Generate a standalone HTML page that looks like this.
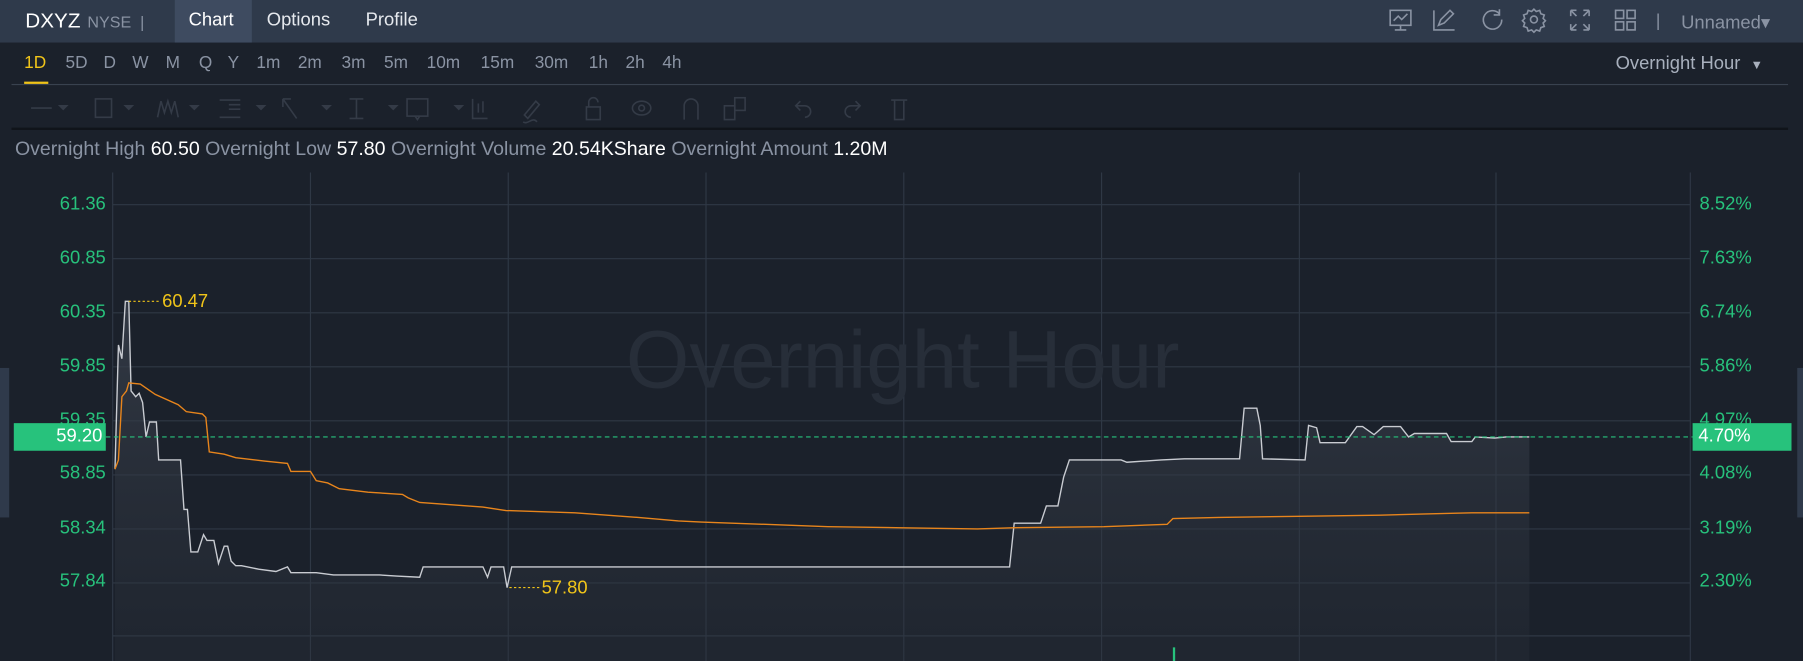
<!DOCTYPE html>
<html><head><meta charset="utf-8"><style>
html,body{margin:0;padding:0;background:#1b212b;overflow:hidden;width:1803px;height:661px}
#r{position:absolute;left:0;top:0;width:1568px;height:575px;transform:scale(1.14987);transform-origin:0 0;font-family:"Liberation Sans",sans-serif;background:#1b212b;overflow:hidden}
.a{position:absolute;white-space:nowrap}
#top{position:absolute;left:0;top:0;width:1568px;height:37px;background:#2f3a4b}
.tf{position:absolute;top:46px;font-size:15px;color:#8a93a3}
.yl{position:absolute;font-size:16px;color:#27c27c;text-align:right;width:80px;left:12px}
.yr{position:absolute;font-size:16px;color:#27c27c;left:1478px}
</style></head><body><div id="r">
<div id="top"></div>
<div class="a" style="left:152px;top:0;width:67px;height:37px;background:#3e4b60"></div>
<div class="a" style="left:22px;top:8px;font-size:18px;color:#fff">DXYZ</div>
<div class="a" style="left:76px;top:11px;font-size:14px;color:#8a93a3">NYSE &nbsp;|</div>
<div class="a" style="left:164px;top:9px;font-size:16px;color:#fff">Chart</div>
<div class="a" style="left:232px;top:9px;font-size:16px;color:#e6e9ee">Options</div>
<div class="a" style="left:318px;top:9px;font-size:16px;color:#e6e9ee">Profile</div>
<svg class="a" style="left:1200px;top:5px" width="230" height="28" fill="none" stroke="#8a93a3" stroke-width="1.4">
<rect x="9" y="4" width="18" height="13"/><path d="M12 13l4-4 3 3 5-5M18 17v4M13 21h10"/>
<path d="M47 4v17h18M51 17l2-5 8-8 3 3-8 8z"/>
<path d="M104 7a8 8 0 1 0 2 5M104 3v5h-5"/>
<circle cx="134" cy="12" r="3"/><path d="M134 3l2 2 3-1 1 3 3 1-1 3 2 2-2 2 1 3-3 1-1 3-3-1-2 2-2-2-3 1-1-3-3-1 1-3-2-2 2-2-1-3 3-1 1-3 3 1z"/>
<path d="M166 4h5M166 4v5M166 4l5 5M182 4h-5M182 4v5M182 4l-5 5M166 21h5M166 21v-5M166 21l5-5M182 21h-5M182 21v-5M182 21l-5-5"/>
<rect x="205" y="4" width="7" height="7"/><rect x="215" y="4" width="7" height="7"/><rect x="205" y="14" width="7" height="7"/><rect x="215" y="14" width="7" height="7"/>
</svg>
<div class="a" style="left:1440px;top:10px;font-size:15px;color:#8a93a3">|</div>
<div class="a" style="left:1462px;top:10px;font-size:16px;color:#8a93a3">Unnamed&#9662;</div>

<span class="tf" style="left:21px;color:#f0c419">1D</span>
<div class="a" style="left:21px;top:71px;width:21px;height:2px;background:#f0c419"></div>
<span class="tf" style="left:57px">5D</span><span class="tf" style="left:90px">D</span><span class="tf" style="left:115px">W</span><span class="tf" style="left:144px">M</span><span class="tf" style="left:173px">Q</span><span class="tf" style="left:198px">Y</span><span class="tf" style="left:223px">1m</span><span class="tf" style="left:259px">2m</span><span class="tf" style="left:297px">3m</span><span class="tf" style="left:334px">5m</span><span class="tf" style="left:371px">10m</span><span class="tf" style="left:418px">15m</span><span class="tf" style="left:465px">30m</span><span class="tf" style="left:512px">1h</span><span class="tf" style="left:544px">2h</span><span class="tf" style="left:576px">4h</span>
<div class="a" style="left:1405px;top:47px;font-size:16px;color:#a8b0bd">Overnight Hour &nbsp;<span style="font-size:11px">&#9660;</span></div>
<div class="a" style="left:10px;top:73px;width:1545px;height:1px;background:#39424f"></div>
<svg class="a" style="left:15px;top:78px" width="790" height="34" fill="none" stroke="#343b47" stroke-width="1.4">
<path d="M12 16h18"/><path d="M37 14l3 3 3-3z" fill="#343b47"/>
<rect x="68" y="8" width="14" height="16"/><path d="M94 14l3 3 3-3zM151 14l3 3 3-3zM209 14l3 3 3-3zM266 14l3 3 3-3zM324 14l3 3 3-3zM381 14l3 3 3-3z" fill="#343b47"/>
<path d="M122 24l3-14 3 10 3-10 3 10 3-10 3 14"/>
<path d="M176 9h18M184 13h10M184 17h10M176 24h18"/>
<path d="M231 8l12 17M231 8v7M231 8h7"/>
<path d="M289 8h12M295 8v17M289 25h12"/>
<rect x="339" y="8" width="18" height="15"/><path d="M346 23l2 3 2-3"/>
<path d="M396 8v17h13M401 12v8M405 10v10"/>
<path d="M440 28c4 3 8-5 12 0M441 22l10-12 3 3-10 12z"/>
<rect x="495" y="15" width="12" height="11"/><path d="M497 15v-4a4 4 0 0 1 8 0"/>
<ellipse cx="543" cy="16" rx="8" ry="6"/><circle cx="543" cy="16" r="2.5"/>
<path d="M580 26V14a6 6 0 0 1 12 0v12"/>
<rect x="615" y="14" width="9" height="12"/><rect x="624" y="7" width="9" height="11"/>
<path d="M681 10l-4 4 4 4M677 14h8a5 5 0 0 1 0 10"/><path d="M729 10l4 4-4 4M733 14h-8a5 5 0 0 0 0 10"/>
<path d="M760 9h14M763 9v17h8v-17"/>
</svg>
<div class="a" style="left:10px;top:111px;width:1545px;height:2px;background:#10141a"></div>
<div class="a" style="left:13px;top:120px;font-size:17px;color:#8a93a3">Overnight High <span style="color:#fff">60.50</span> Overnight Low <span style="color:#fff">57.80</span> Overnight Volume <span style="color:#fff">20.54KShare</span> Overnight Amount <span style="color:#fff">1.20M</span></div>

<svg class="a" style="left:0;top:145px" width="1568" height="430">
<defs><linearGradient id="g" x1="0" y1="0" x2="0" y2="1"><stop offset="0" stop-color="#3a414d" stop-opacity=".75"/><stop offset="1" stop-color="#2a303a" stop-opacity=".3"/></linearGradient></defs>
<g stroke="#2f3845" stroke-width="1">
<path d="M98 5V430M270 5V430M442 5V430M614 5V430M786 5V430M958 5V430M1130 5V430M1301 5V430M1470 5V430"/>
<path d="M98 33H1470M98 80H1470M98 127H1470M98 174H1470M98 221H1470M98 268H1470M98 315H1470M98 362H1470M98 408H1470"/>
</g>
<text x="785" y="192" font-family="Liberation Sans" font-size="71" fill="#272e39" text-anchor="middle">Overnight Hour</text>
<g transform="translate(0,-145)">
<path fill="url(#g)" d="M100 408L103 300 106 312 109 262 112 262 114 340 118 345 121 342 124 350 127 380 130 367 136 367 138 400 146 400 157 400 160 443 163 443 166 480 172 480 177 465 180 470 186 470 190 490 195 475 198 475 201 488 205 492 210 492 225 495 240 497 250 493 253 498 275 498 290 500 330 500 345 501 365 502 368 493 420 493 424 502 427 493 438 493 441 511 445 493 878 493 882 455 905 455 910 440 920 440 925 415 930 400 975 400 980 402 1010 400 1030 399 1078 399 1082 355 1093 355 1096 370 1098 399 1135 400 1138 370 1145 372 1148 385 1170 385 1180 371 1185 371 1195 378 1203 371 1218 371 1225 380 1230 377 1258 377 1262 384 1280 384 1283 380 1300 381 1310 380 1330 380 1330 575 100 575Z"/>
<path fill="none" stroke="#c9ccd2" stroke-width="1.2" d="M100 408L103 300 106 312 109 262 112 262 114 340 118 345 121 342 124 350 127 380 130 367 136 367 138 400 146 400 157 400 160 443 163 443 166 480 172 480 177 465 180 470 186 470 190 490 195 475 198 475 201 488 205 492 210 492 225 495 240 497 250 493 253 498 275 498 290 500 330 500 345 501 365 502 368 493 420 493 424 502 427 493 438 493 441 511 445 493 878 493 882 455 905 455 910 440 920 440 925 415 930 400 975 400 980 402 1010 400 1030 399 1078 399 1082 355 1093 355 1096 370 1098 399 1135 400 1138 370 1145 372 1148 385 1170 385 1180 371 1185 371 1195 378 1203 371 1218 371 1225 380 1230 377 1258 377 1262 384 1280 384 1283 380 1300 381 1310 380 1330 380"/>
<path fill="none" stroke="#e8851c" stroke-width="1.2" d="M100 408L103 400 106 345 110 340 112 333 122 334 135 343 155 352 162 358 176 360 179 363 182 393 195 395 205 398 230 401 250 403 253 410 270 410 275 418 285 420 295 425 320 428 350 430 355 433 365 437 420 441 440 444 500 446 555 450 590 453 610 454 720 458 785 459 850 460 880 459 960 458 1015 456 1020 451 1060 450 1130 449 1200 448 1240 447 1280 446 1330 446"/>
<path d="M112 262H140M443 511H470" stroke="#f0c419" stroke-dasharray="2 2" stroke-width="1"/>
<path d="M92 380H1472" stroke="#27c27c" stroke-dasharray="4 3" stroke-width="1"/>
<text x="141" y="267" font-family="Liberation Sans" font-size="16" fill="#f0c419">60.47</text>
<text x="471" y="516" font-family="Liberation Sans" font-size="16" fill="#f0c419">57.80</text>
<path d="M1021 563V575" stroke="#27c27c" stroke-width="2"/>
</g>
</svg>
<div class="yl" style="top:169px">61.36</div><div class="yl" style="top:216px">60.85</div><div class="yl" style="top:263px">60.35</div><div class="yl" style="top:310px">59.85</div><div class="yl" style="top:357px">59.35</div><div class="yl" style="top:403px">58.85</div><div class="yl" style="top:451px">58.34</div><div class="yl" style="top:497px">57.84</div>
<div class="yr" style="top:169px">8.52%</div><div class="yr" style="top:216px">7.63%</div><div class="yr" style="top:263px">6.74%</div><div class="yr" style="top:310px">5.86%</div><div class="yr" style="top:357px">4.97%</div><div class="yr" style="top:403px">4.08%</div><div class="yr" style="top:451px">3.19%</div><div class="yr" style="top:497px">2.30%</div>
<div class="a" style="left:12px;top:368px;width:80px;height:24px;background:#27c27c;color:#fff;font-size:16px;line-height:24px;text-align:right;box-sizing:border-box;padding-right:3px">59.20</div>
<div class="a" style="left:1472px;top:368px;width:86px;height:24px;background:#27c27c;color:#fff;font-size:16px;line-height:24px;box-sizing:border-box;padding-left:5px">4.70%</div>
<div class="a" style="left:0;top:320px;width:8px;height:130px;background:#2f3a4b"></div>
<div class="a" style="left:1563px;top:320px;width:5px;height:130px;background:#2f3a4b"></div>
</div></body></html>
